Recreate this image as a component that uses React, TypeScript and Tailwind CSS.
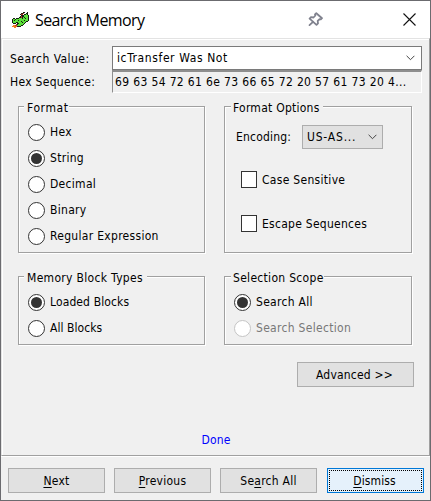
import React from "react";

type GroupProps = { title: string; className: string; titleClass: string; children: React.ReactNode };

function Group({ title, className, titleClass, children }: GroupProps) {
  return (
    <section className={`relative border border-[#a0a0a0] shadow-[1px_1px_0_#fff,inset_1px_1px_0_#fff] ${className}`}>
      <h2 className={`absolute -top-[7px] h-[16px] bg-[#f0f0f0] leading-[16px] ${titleClass}`}>{title}</h2>
      {children}
    </section>
  );
}

type RadioProps = { label: string; checked?: boolean; disabled?: boolean; spacing?: string };

function Radio({ label, checked, disabled, spacing = "tracking-[0.3px]" }: RadioProps) {
  return (
    <label className={`flex h-[26px] items-center gap-[5px] ${disabled ? "text-[#787878]" : ""}`}>
      <svg width="17" height="17" viewBox="0 0 17 17" className="shrink-0">
        <circle cx="8.5" cy="8.5" r="8" fill="#fff" stroke={disabled ? "#c4c4c4" : "#333"} />
        {checked && <circle cx="8.5" cy="8.5" r="5.5" fill="#333" />}
      </svg>
      <span className={spacing}>{label}</span>
    </label>
  );
}

function Check({ label, spacing }: { label: string; spacing: string }) {
  return (
    <label className="flex h-[17px] items-center gap-[5px]">
      <span className="h-[17px] w-[16px] border border-[#333] bg-white" />
      <span className={spacing}>{label}</span>
    </label>
  );
}

function Chevron() {
  return (
    <svg width="9" height="6" viewBox="0 0 9 6" fill="none" stroke="#444">
      <path d="M.6.8 4.5 4.7 8.4.8" />
    </svg>
  );
}

const dragonRows = [
  "...........kk..k.",
  ".........kkr..kk.",
  "........krr.kkgk.",
  ".........kkkggggk",
  "........krkkggggk",
  ".......kkrkgkgggk",
  ".kk.kkkgggkggkggk",
  "kggkggggggggggggk",
  "kgkgggkgggggkgggk",
  "kggggggggkggggkk.",
  "kgggkkggggkggk...",
  ".kkkwkkgggggk....",
  "....rkgggggk.....",
  ".oorrggggkk......",
  "oooookkkk........",
  "..oo.............",
];

const dragonColors: Record<string, string> = {
  k: "#142010",
  g: "#5be03a",
  r: "#b8322a",
  w: "#ffffff",
  o: "#f57a20",
};

function Dragon() {
  return (
    <svg width="17" height="16" viewBox="0 0 17 16" shapeRendering="crispEdges">
      {dragonRows.flatMap((row, y) =>
        row.split("").map((c, x) =>
          c === "." ? null : <rect key={`${x}-${y}`} x={x} y={y} width="1" height="1" fill={dragonColors[c]} />
        )
      )}
    </svg>
  );
}

function Pin() {
  return (
    <svg width="15" height="15" viewBox="0 0 15 15" fill="none" stroke="#80828e" strokeWidth="1.8" strokeLinejoin="round" strokeLinecap="round">
      <path d="M8.3 1.2 14 6.2 12.8 7.4 11.6 7.1 9.7 9 10 11.4 8.5 12.9 1.6 6.6 3 5.2 5.5 5.5 7.4 3.5 7 2.4Z" />
      <path d="M5 9.8 1.5 13.1" />
    </svg>
  );
}

const button = "flex h-[25px] w-[97px] items-center justify-center border border-[#adadad] bg-[#e1e1e1] tracking-[0.25px]";
const key = "underline decoration-1 underline-offset-2";

export default function App() {
  return (
    <main className="flex h-[501px] w-[431px] flex-col border border-[#6b6b6f] bg-[#f0f0f0] font-['DejaVu_Sans_Condensed','DejaVu_Sans',sans-serif] text-[12px] leading-[16px] whitespace-nowrap text-black">
      <header className="flex h-[37px] shrink-0 items-center bg-white">
        <span className="ml-[11px]"><Dragon /></span>
        <h1 className="ml-[6px] font-['Open_Sans',sans-serif] text-[16px] leading-[22px] tracking-[-0.6px]">Search Memory</h1>
        <span className="ml-auto"><Pin /></span>
        <svg width="13" height="13" viewBox="0 0 13 13" stroke="#111" strokeWidth="1.1" className="mr-[14px] ml-[80px]">
          <path d="M.5.5l12 12M12.5.5l-12 12" />
        </svg>
      </header>

      <div className="h-[418px] shrink-0 border border-t-[#e3e3e3] border-r-[#a0a0a0] border-b-[#a0a0a0] border-l-[#e3e3e3] shadow-[0_1px_0_#fff,inset_1px_1px_0_#fff]">
        <div className="flex pt-[7px] pl-[8px]">
          <div className="w-[102px] shrink-0">
            <p className="mt-[5px] tracking-[0.45px]">Search Value:</p>
            <p className="mt-[7px] tracking-[0.3px]">Hex Sequence:</p>
          </div>
          <div className="w-[310px]">
            <div className="flex h-[24px] items-center justify-between border border-[#7a7a7a] bg-white pr-[6px] pl-[4px] tracking-[0.6px]">
              <span>icTransfer Was Not</span>
              <Chevron />
            </div>
            <div className="h-[23px] border border-t-2 border-t-[#8e8e8e] border-r-white border-b-white border-l-[#8e8e8e] pt-[2px] pl-[2px] tracking-[0.35px]">
              69 63 54 72 61 6e 73 66 65 72 20 57 61 73 20 4...
            </div>
          </div>
        </div>

        <div className="mt-[13px] flex gap-[19px] pl-[16px]">
          <Group title="Format" className="h-[147px] w-[187px] pt-[12px] pl-[9px]" titleClass="left-[5px] pl-[3px] tracking-[0.6px]">
            <Radio label="Hex" />
            <Radio label="String" checked />
            <Radio label="Decimal" />
            <Radio label="Binary" />
            <Radio label="Regular Expression" />
          </Group>
          <Group title="Format Options" className="h-[147px] w-[188px] pt-[18px]" titleClass="left-[6px] pl-[2px] pr-[3px] tracking-[0.25px]">
            <div className="flex h-[24px] items-center pl-[11px]">
              <span className="w-[66px] tracking-[0.2px]">Encoding:</span>
              <div className="flex h-[24px] w-[81px] items-center justify-between border border-[#adadad] bg-[#e1e1e1] pr-[5px] pl-[4px] tracking-[0.8px]">
                <span>US-AS...</span>
                <Chevron />
              </div>
            </div>
            <div className="mt-[22px] flex flex-col gap-[27px] pl-[16px]">
              <Check label="Case Sensitive" spacing="tracking-[0.3px]" />
              <Check label="Escape Sequences" spacing="tracking-[0.27px]" />
            </div>
          </Group>
        </div>

        <div className="mt-[23px] flex gap-[19px] pl-[16px]">
          <Group title="Memory Block Types" className="h-[69px] w-[187px] pt-[12px] pl-[9px]" titleClass="left-[5px] pl-[3px] pr-[4px] tracking-[0.32px]">
            <Radio label="Loaded Blocks" checked spacing="tracking-[0.12px]" />
            <Radio label="All Blocks" spacing="tracking-[0.05px]" />
          </Group>
          <Group title="Selection Scope" className="h-[69px] w-[188px] pt-[12px] pl-[9px]" titleClass="left-[6px] pl-[2px] tracking-[0.3px]">
            <Radio label="Search All" checked />
            <Radio label="Search Selection" disabled />
          </Group>
        </div>

        <div className="mt-[17px] mr-[15px] flex justify-end">
          <button className="h-[25px] w-[117px] border border-[#adadad] bg-[#e1e1e1] pr-[2px] tracking-[0.2px]">Advanced &gt;&gt;</button>
        </div>
        <p className="mt-[45px] pl-px text-center tracking-[0.2px] text-[#0000ff]">Done</p>
      </div>

      <footer className="flex gap-[9px] pt-[12px] pl-[7px]">
        <button className={button}><span><u className={key}>N</u>ext</span></button>
        <button className={button}><span><u className={key}>P</u>revious</span></button>
        <button className={button}><span>Se<u className={key}>a</u>rch All</span></button>
        <button className="ml-px h-[25px] w-[97px] border border-[#0078d7] bg-[#e5f1fb] p-[1px]">
          <span className="flex h-full items-center justify-center border border-dotted border-black pr-[2px] tracking-[0.1px]">
            <span><u className={key}>D</u>ismiss</span>
          </span>
        </button>
      </footer>
    </main>
  );
}
